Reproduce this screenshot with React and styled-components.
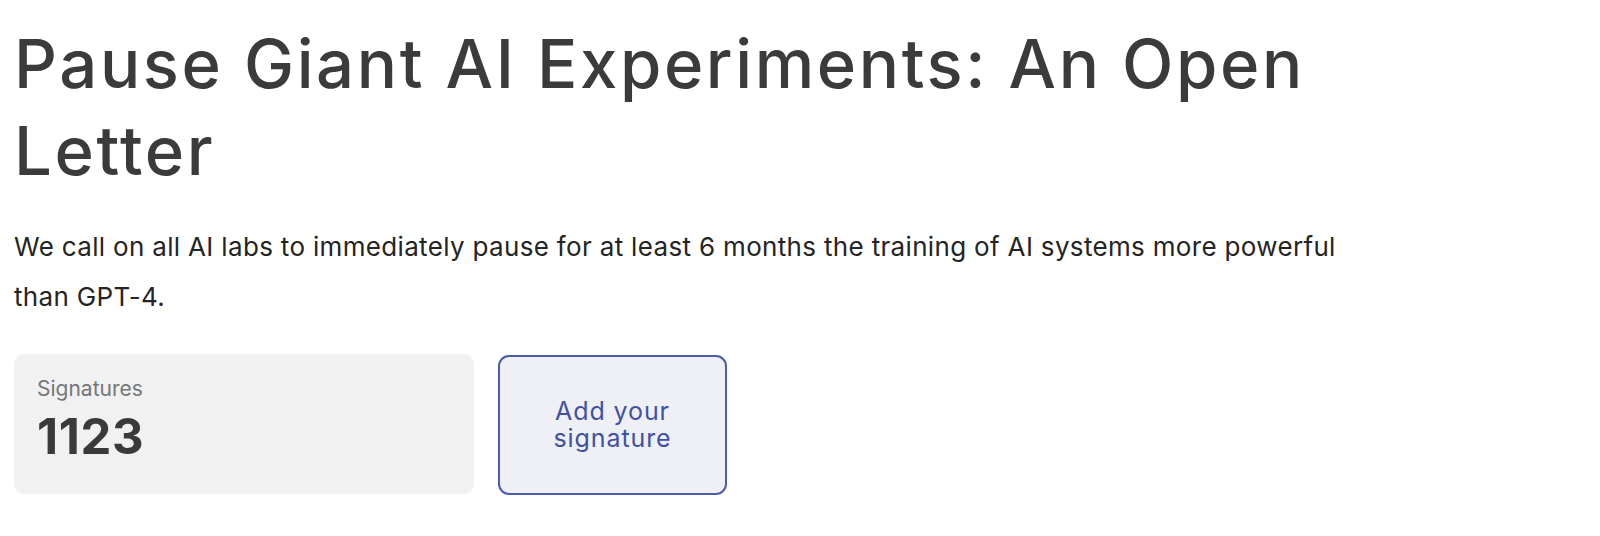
import React from "react";
import styled, { createGlobalStyle } from "styled-components";

const GlobalStyle = createGlobalStyle`
  html, body {
    margin: 0;
    padding: 0;
    background: #ffffff;
  }
  body {
    font-family: Inter, "Noto Sans", "Liberation Sans", sans-serif;
    -webkit-font-smoothing: antialiased;
  }
  * { box-sizing: border-box; }
`;

const Page = styled.main`
  padding: 20px 14px 0 14px;
  width: 1360px;
`;

const Title = styled.h1`
  margin: 0;
  font-size: 67px;
  line-height: 87px;
  font-weight: 500;
  color: #3b3b3b;
  letter-spacing: 2.6px;
`;

const Lead = styled.p`
  margin: 28px 0 0 0;
  font-size: 26px;
  line-height: 50px;
  font-weight: 400;
  color: #242424;
  letter-spacing: 0.33px;
`;

const Actions = styled.div`
  display: flex;
  gap: 24px;
  margin-top: 32px;
  align-items: stretch;
`;

const StatCard = styled.div`
  width: 460px;
  height: 140px;
  padding: 22px 23px 0 23px;
  background: #f1f1f2;
  border-radius: 10px;
  display: flex;
  flex-direction: column;
  gap: 6px;
`;

const StatLabel = styled.div`
  font-size: 21px;
  line-height: 25px;
  color: #767676;
`;

const StatValue = styled.div`
  font-size: 49px;
  line-height: 59px;
  font-weight: 700;
  color: #3a3a3a;
  letter-spacing: 0.6px;
`;

const SignButton = styled.button`
  width: 229px;
  height: 140px;
  margin-top: 1px;
  border: 2px solid #4a5da9;
  border-radius: 11px;
  background: #eef0f5;
  color: #3f51a5;
  font-family: inherit;
  font-size: 25px;
  line-height: 27px;
  font-weight: 400;
  letter-spacing: 0.9px;
  display: flex;
  align-items: center;
  justify-content: center;
  text-align: center;
  padding: 0 40px;
  cursor: pointer;
`;

export default function App() {
  return (
    <>
      <GlobalStyle />
      <Page>
        <Title>Pause Giant AI Experiments: An Open Letter</Title>
        <Lead>
          We call on all AI labs to immediately pause for at least 6 months the
          training of AI systems more powerful than GPT-4.
        </Lead>
        <Actions>
          <StatCard>
            <StatLabel>Signatures</StatLabel>
            <StatValue>1123</StatValue>
          </StatCard>
          <SignButton>Add your signature</SignButton>
        </Actions>
      </Page>
    </>
  );
}
